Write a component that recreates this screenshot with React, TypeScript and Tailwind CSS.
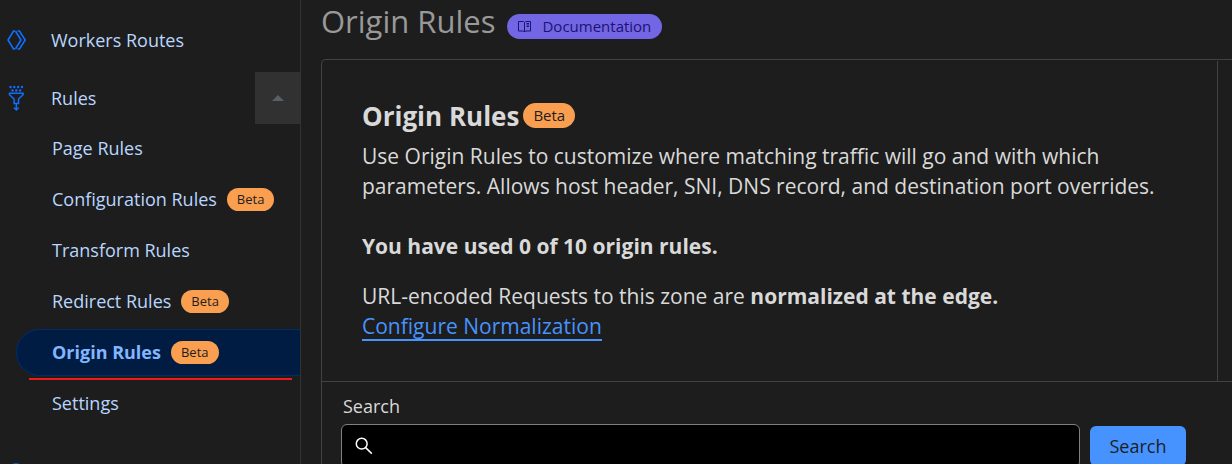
import type { ReactNode } from "react";

function Badge({ large = false }: { large?: boolean }) {
  return (
    <span
      className={
        large
          ? "inline-flex h-[25px] items-center rounded-full bg-[#fa9f50] px-[10px] text-[15px] font-normal leading-none text-[#1d1d1d]"
          : "inline-flex h-[23px] items-center rounded-full bg-[#fa9f50] px-[10px] text-[13px] font-normal leading-none text-[#1d1d1d]"
      }
    >
      Beta
    </span>
  );
}

function WorkersIcon() {
  return (
    <svg width="20" height="20" viewBox="0 0 20 20" fill="none" stroke="#0f6fff" strokeWidth="1.6" aria-hidden="true">
      <path d="M8 1H6.500L1 10l5.500 9H8" />
      <path d="M8.400 1l5.600 9-5.600 9" />
      <path d="M10.500 1h2l5.700 9-5.700 9h-2" />
    </svg>
  );
}

function RulesIcon() {
  return (
    <svg width="18" height="26" viewBox="0 0 18 26" aria-hidden="true">
      <g fill="#0f6fff">
        <circle cx="3.500" cy="2" r="1.200" />
        <circle cx="7.300" cy="2" r="1.200" />
        <circle cx="11.200" cy="2" r="1.200" />
        <circle cx="15" cy="2" r="1.200" />
        <circle cx="5.500" cy="5.500" r="1.200" />
        <circle cx="9.300" cy="5.500" r="1.200" />
        <circle cx="13.100" cy="5.500" r="1.200" />
      </g>
      <path d="M2.500 8.300h13.600v1.400L11.500 14v4.500H7.100V14L2.500 9.700Z" fill="none" stroke="#0f6fff" strokeWidth="1.500" />
      <path d="M9.300 18.500v6M6.900 22.500l2.400 2.500 2.400-2.500" fill="none" stroke="#0f6fff" strokeWidth="1.400" />
    </svg>
  );
}

function BookIcon() {
  return (
    <svg width="14" height="13" viewBox="0 0 14 13" fill="none" stroke="#1c1272" strokeWidth="1" aria-hidden="true">
      <path d="M.500 1.500h5L6.500 2.500l1-1h5v9.500h-5l-1 1-1-1h-5ZM6.500 2.500V12" />
      <path d="M8.500 3.500h2.500M8.500 5h2.500M8.500 6.500h2.500" />
    </svg>
  );
}

function SearchIcon() {
  return (
    <svg width="18" height="18" viewBox="0 0 18 18" fill="none" stroke="#fff" strokeWidth="1.500" aria-hidden="true">
      <circle cx="6.700" cy="6.700" r="5.400" />
      <path d="m10.600 10.600 6.200 6" />
    </svg>
  );
}

function NavItem({ children, beta, active }: { children: ReactNode; beta?: boolean; active?: boolean }) {
  return (
    <li>
      <a
        href="#"
        aria-current={active ? "page" : undefined}
        className={
          active
            ? "relative ml-4 flex h-[47px] items-center gap-[10px] rounded-l-full border border-r-0 border-[#002c68] bg-[#001c43] pl-[35px] font-bold text-[#82b6ff]"
            : "ml-4 flex h-[47px] items-center gap-[10px] pl-9"
        }
      >
        {children}
        {beta && <Badge />}
        {active && <span className="absolute -bottom-[5px] left-3 right-2 h-[2px] bg-[#e81b1f]" />}
      </a>
    </li>
  );
}

function Sidebar() {
  return (
    <nav className="w-[301px] shrink-0 border-r border-[#333] pt-[14px] text-[18px] text-[#b9d6ff]">
      <a href="#" className="mb-[6px] flex h-[52px] items-center pl-[7px]">
        <span className="w-11">
          <WorkersIcon />
        </span>
        Workers Routes
      </a>
      <div className="flex h-[52px] items-center pl-[7px]">
        <span className="w-11">
          <RulesIcon />
        </span>
        <a href="#" className="flex-1">
          Rules
        </a>
        <button type="button" aria-label="Collapse Rules" className="flex h-full w-[45px] items-center justify-center bg-[#313131]">
          <svg width="12" height="6" viewBox="0 0 12 6" fill="#595f66" aria-hidden="true">
            <path d="M6 0 12 6H0Z" />
          </svg>
        </button>
      </div>
      <ul className="flex flex-col gap-1 pt-px">
        <NavItem>Page Rules</NavItem>
        <NavItem beta>Configuration Rules</NavItem>
        <NavItem>Transform Rules</NavItem>
        <NavItem beta>Redirect Rules</NavItem>
        <NavItem beta active>
          Origin Rules
        </NavItem>
        <NavItem>Settings</NavItem>
      </ul>
      <div className="pl-[6px] pt-9">
        <svg width="20" height="20" viewBox="0 0 20 20" fill="none" stroke="#0f6fff" strokeWidth="1.400" aria-hidden="true">
          <circle cx="10" cy="10" r="9" />
        </svg>
      </div>
    </nav>
  );
}

export default function App() {
  return (
    <div className="flex h-screen overflow-hidden bg-[#1d1d1d] font-['Open_Sans','Noto_Sans',sans-serif] text-[#d9d9d9]">
      <Sidebar />
      <main className="min-w-0 flex-1 pl-5">
        <header className="flex h-[59px] items-start gap-3">
          <h1 className="text-[31px] leading-[42px] text-[#999]">Origin Rules</h1>
          <a
            href="#"
            className="mt-[14px] flex h-[25px] items-center gap-[10px] rounded-full bg-[#7366e4] px-[11px] text-[15px] text-[#1c1272]"
          >
            <BookIcon />
            Documentation
          </a>
        </header>
        <section className="rounded-tl-[5px] border-l border-t border-[#424242]">
          <div className="flex border-b border-[#424242]">
            <div className="flex-1 pb-10 pl-10 pt-[38px] text-[21px] leading-[30px]">
              <div className="mb-2 flex h-[35px] items-center gap-1">
                <h2 className="text-[26px] font-bold">Origin Rules</h2>
                <Badge large />
              </div>
              <p className="max-w-[800px]">
                Use Origin Rules to customize where matching traffic will go and with which parameters. Allows host header,
                SNI, DNS record, and destination port overrides.
              </p>
              <p className="mt-[30px] font-bold">You have used 0 of 10 origin rules.</p>
              <p className="mt-5">
                URL-encoded Requests to this zone are <strong>normalized at the edge.</strong>
              </p>
              <a href="#" className="inline-block h-[30px] border-b-2 border-[#4693ff] text-[#4693ff]">
                Configure Normalization
              </a>
            </div>
            <div className="mt-px w-[15px] border-l border-[#424242]" />
          </div>
          <form className="pl-[19px] pr-[46px] pt-[11px]" onSubmit={(e) => e.preventDefault()}>
            <label htmlFor="rule-search" className="block pl-[2px] text-[18px] leading-[26px]">
              Search
            </label>
            <div className="mt-[5px] flex items-center gap-[10px]">
              <div className="flex h-11 flex-1 items-center gap-2 rounded-[6px] border border-[#808080] bg-black pl-[13px]">
                <SearchIcon />
                <input id="rule-search" type="text" className="min-w-0 flex-1 bg-transparent text-[18px] outline-none" />
              </div>
              <button type="submit" className="h-10 w-24 rounded-[6px] bg-[#4693ff] text-[18px] text-[#1d1d1d]">
                Search
              </button>
            </div>
          </form>
        </section>
      </main>
    </div>
  );
}
